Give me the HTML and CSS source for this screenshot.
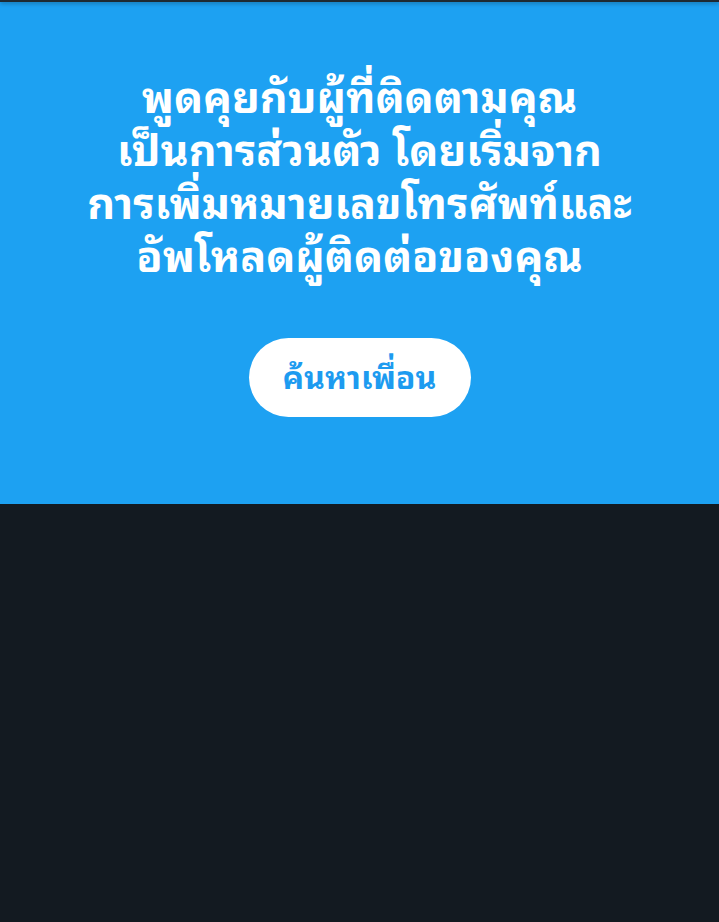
FILE: index.html
```html
<!DOCTYPE html>
<html lang="th">
<head>
<meta charset="utf-8">
<link rel="stylesheet" href="styles.css">
</head>
<body>
<div class="topbar"></div>
<section class="hero">
  <h1 class="title">พูดคุยกับผู้ที่ติดตามคุณ<br>เป็นการส่วนตัว โดยเริ่มจาก<br>การเพิ่มหมายเลขโทรศัพท์และ<br>อัพโหลดผู้ติดต่อของคุณ</h1>
  <button class="cta">ค้นหาเพื่อน</button>
</section>
<div class="rest"></div>
</body>
</html>
```
FILE: styles.css
```css
html, body {
  margin: 0;
  padding: 0;
  background: #131a21;
  font-family: "Noto Sans Thai Looped", "Loma", "Garuda", "Tahoma", "Noto Serif Thai", "Noto Sans", sans-serif;
}
.topbar {
  height: 2px;
  background: #1e2a33;
  box-shadow: 0 1px 4px rgba(0,0,0,0.45);
  position: relative;
  z-index: 1;
}
.hero {
  background: #1da1f2;
  height: 502px;
  display: flex;
  flex-direction: column;
  align-items: center;
  box-sizing: border-box;
  padding-top: 65px;
}
.title {
  margin: 0;
  color: #fff;
  font-size: 43px;
  font-weight: 700;
  line-height: 53px;
  text-align: center;
}
.cta {
  margin-top: 59px;
  width: 222px;
  height: 79px;
  padding: 0 0 6px;
  border: none;
  border-radius: 40px;
  background: #fff;
  color: #1d9bf0;
  font-family: inherit;
  font-size: 32px;
  font-weight: 700;
}
```
